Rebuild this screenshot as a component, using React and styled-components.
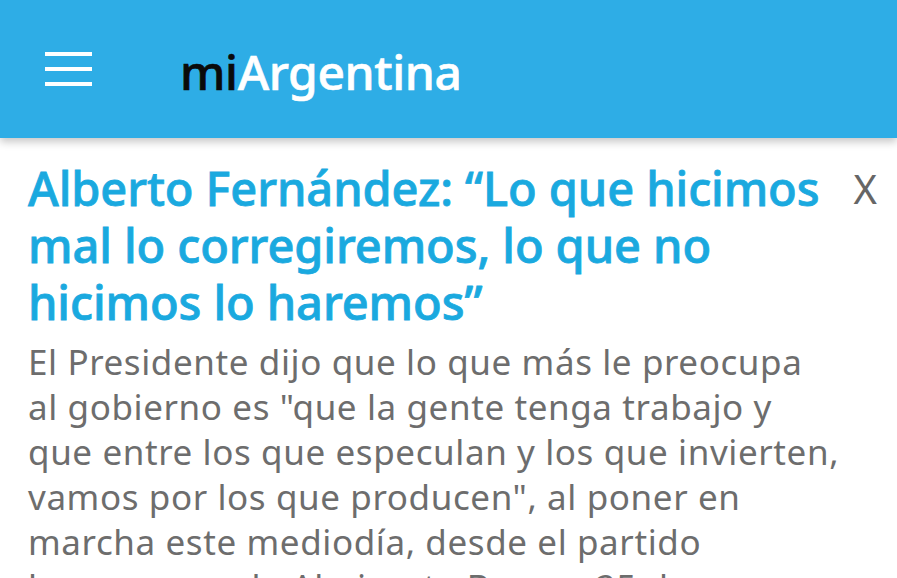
import React from 'react';
import styled, { createGlobalStyle } from 'styled-components';

const GlobalStyle = createGlobalStyle`
  html, body {
    margin: 0;
    padding: 0;
    background: #fff;
    overflow: hidden;
  }
  body {
    font-family: "Noto Sans", Roboto, sans-serif;
  }
`;

const Page = styled.div`
  width: 897px;
  height: 578px;
  overflow: hidden;
  background: #fff;
`;

const TopBar = styled.header`
  height: 138px;
  background: #2eade6;
  display: flex;
  align-items: center;
  padding-left: 45px;
  box-shadow: 0 4px 8px rgba(0, 0, 0, 0.22);
  position: relative;
  z-index: 2;
`;

const MenuButton = styled.button`
  width: 47px;
  height: 34px;
  padding: 0;
  border: 0;
  background: none;
  display: flex;
  flex-direction: column;
  justify-content: space-between;
  margin-right: 88px;

  span {
    display: block;
    height: 4px;
    background: #fff;
  }
`;

const Logo = styled.div`
  font-size: 48px;
  font-weight: 500;
  letter-spacing: -0.4px;
  color: #fff;
  margin-top: 5px;
  -webkit-text-stroke: 0.6px #fff;

  b {
    font-weight: 500;
    color: #0a0a0a;
    -webkit-text-stroke: 0.6px #0a0a0a;
  }
`;

const Article = styled.article`
  padding: 22px 20px 0 28px;
`;

const TitleRow = styled.div`
  display: flex;
  align-items: flex-start;
  justify-content: space-between;
`;

const Title = styled.h1`
  margin: 0;
  font-size: 47px;
  font-weight: 500;
  line-height: 57px;
  color: #1aa9df;
  letter-spacing: -0.1px;
  -webkit-text-stroke: 0.8px #1aa9df;
`;

const CloseButton = styled.button`
  border: 0;
  background: none;
  padding: 0;
  font-family: "Noto Sans", sans-serif;
  font-size: 40px;
  font-weight: 400;
  color: #666;
  line-height: 57px;
  margin-left: 14px;
`;

const Summary = styled.p`
  margin: 8px 0 0;
  font-size: 35px;
  line-height: 45px;
  color: #6d6d6d;
  letter-spacing: 0.6px;
`;

export default function App() {
  return (
    <Page>
      <GlobalStyle />
      <TopBar>
        <MenuButton aria-label="Menú">
          <span />
          <span />
          <span />
        </MenuButton>
        <Logo>
          <b>mi</b>Argentina
        </Logo>
      </TopBar>
      <Article>
        <TitleRow>
          <Title>
            Alberto Fernández: “Lo que hicimos
            <br />
            mal lo corregiremos, lo que no
            <br />
            hicimos lo haremos”
          </Title>
          <CloseButton aria-label="Cerrar">X</CloseButton>
        </TitleRow>
        <Summary>
          El Presidente dijo que lo que más le preocupa
          <br />
          al gobierno es "que la gente tenga trabajo y
          <br />
          que entre los que especulan y los que invierten,
          <br />
          vamos por los que producen", al poner en
          <br />
          marcha este mediodía, desde el partido
          <br />
          bonaerense de Almirante Brown, 25 de
        </Summary>
      </Article>
    </Page>
  );
}
